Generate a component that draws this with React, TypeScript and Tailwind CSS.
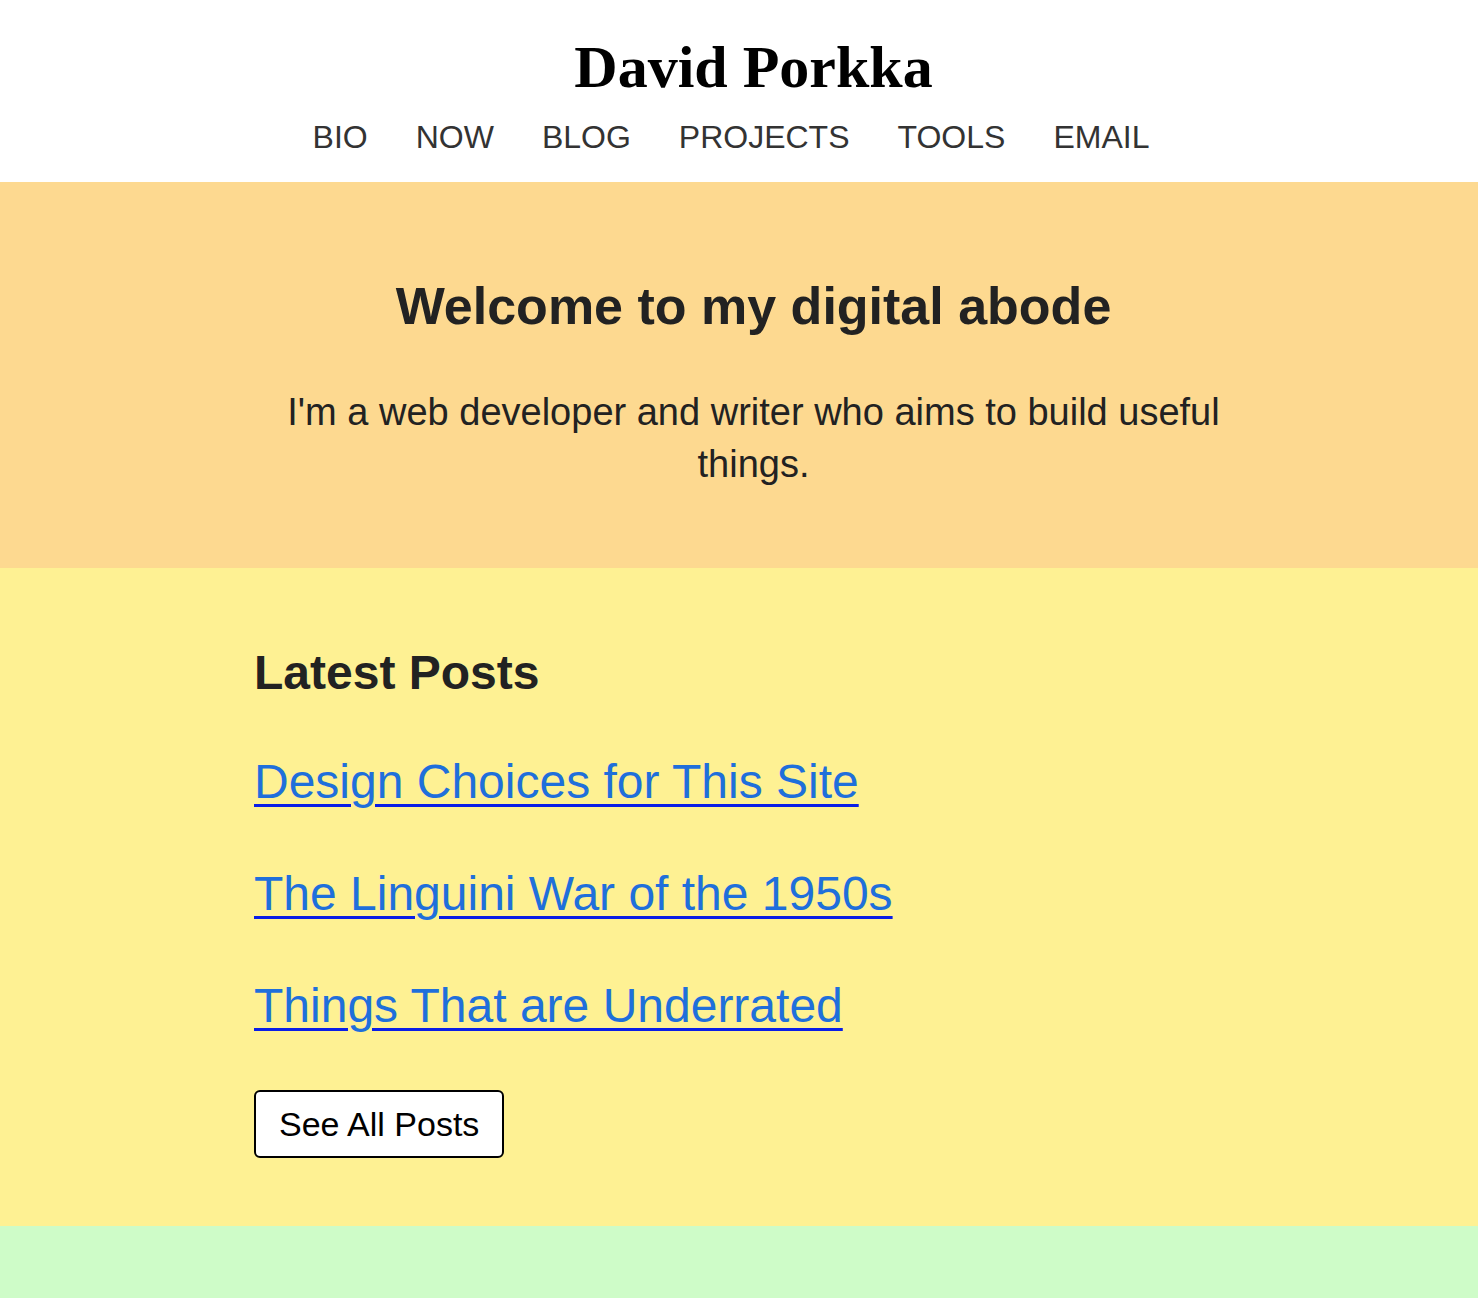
const sans = { fontFamily: '"Liberation Sans", Arial, sans-serif' };

const navItems = ['BIO', 'NOW', 'BLOG', 'PROJECTS', 'TOOLS', 'EMAIL'];

const posts = [
  'Design Choices for This Site',
  'The Linguini War of the 1950s',
  'Things That are Underrated',
];

export default function App() {
  return (
    <div className="bg-white text-[#222]" style={sans}>
      {/* header */}
      <header className="flex flex-col items-center bg-white pt-[31px] pb-[25px]">
        <h1 className="pl-[29px] font-['Liberation_Serif',serif] text-[60px] font-bold leading-[72px] text-black">
          David Porkka
        </h1>
        <nav className="mt-[14px] flex gap-[48px] pr-[16px]">
          {navItems.map((item) => (
            <a key={item} href="#" className="text-[32px] leading-[40px] text-[#333]">
              {item}
            </a>
          ))}
        </nav>
      </header>

      {/* hero */}
      <section className="bg-[#fdd990] px-6 pt-[94px] pb-[78px]">
        <div className="mx-auto max-w-[968px] pl-[29px] text-center">
          <h2 className="text-[52px] font-bold leading-[60px]">Welcome to my digital abode</h2>
          <p className="mt-[50px] text-[38px] leading-[52px]">
            I'm a web developer and writer who aims to build useful things.
          </p>
        </div>
      </section>

      {/* latest posts */}
      <section className="bg-[#fef193] px-6 pt-[77px] pb-[68px]">
        <div className="mx-auto max-w-[968px] -translate-x-px">
          <h2 className="text-[48px] font-bold leading-[56px]">Latest Posts</h2>
          <ul className="mt-[53px] flex flex-col gap-[56px]">
            {posts.map((p) => (
              <li key={p}>
                <a
                  href="#"
                  className="text-[48px] leading-[56px] text-[#1f6fdb] underline decoration-[#0a1ee6] decoration-[3px] underline-offset-[6px]"
                >
                  {p}
                </a>
              </li>
            ))}
          </ul>
          <button className="mt-[56px] rounded-[6px] border-2 border-black bg-white px-[23px] py-[12px] text-[34px] leading-[40px] text-black">
            See All Posts
          </button>
        </div>
      </section>

      {/* footer band */}
      <section className="h-[72px] bg-[#cefcc8]" />
    </div>
  );
}
